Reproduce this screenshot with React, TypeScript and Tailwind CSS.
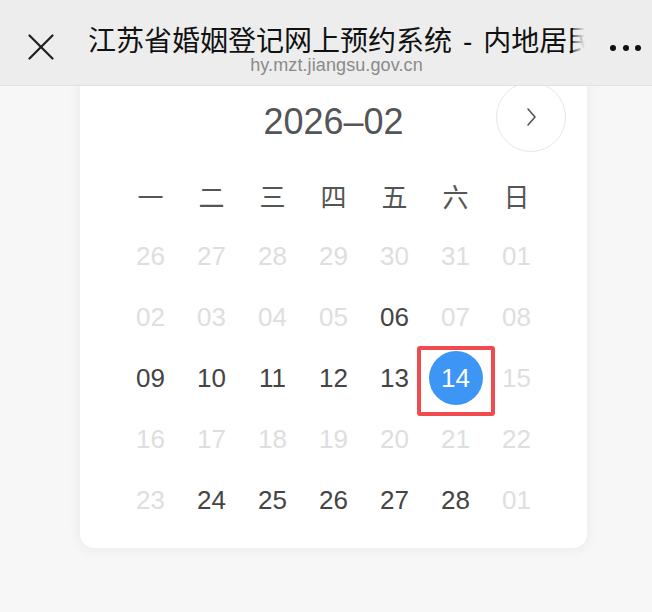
const weekdays = ["一", "二", "三", "四", "五", "六", "日"];

type Day = { label: string; state: "off" | "on" | "selected" };

const rows: Day[][] = [
  ["26", "27", "28", "29", "30", "31", "01"].map((d) => ({ label: d, state: "off" })),
  [
    { label: "02", state: "off" },
    { label: "03", state: "off" },
    { label: "04", state: "off" },
    { label: "05", state: "off" },
    { label: "06", state: "on" },
    { label: "07", state: "off" },
    { label: "08", state: "off" },
  ],
  [
    { label: "09", state: "on" },
    { label: "10", state: "on" },
    { label: "11", state: "on" },
    { label: "12", state: "on" },
    { label: "13", state: "on" },
    { label: "14", state: "selected" },
    { label: "15", state: "off" },
  ],
  ["16", "17", "18", "19", "20", "21", "22"].map((d) => ({ label: d, state: "off" })),
  [
    { label: "23", state: "off" },
    { label: "24", state: "on" },
    { label: "25", state: "on" },
    { label: "26", state: "on" },
    { label: "27", state: "on" },
    { label: "28", state: "on" },
    { label: "01", state: "off" },
  ],
];

function DayCell({ day }: { day: Day }) {
  if (day.state === "selected") {
    return (
      <div className="relative h-[61px] flex items-center justify-center">
        <div className="w-[54px] h-[54px] rounded-full bg-[#3d96f6] text-white flex items-center justify-center">
          {day.label}
        </div>
        {/* red highlight box */}
        <div className="absolute left-[-8px] right-[-9px] top-[-2px] bottom-[-7px] border-[4px] border-[#f0494e] rounded-[3px]" />
      </div>
    );
  }
  return (
    <div
      className={
        day.state === "on"
          ? "h-[61px] flex items-center justify-center text-[#444]"
          : "h-[61px] flex items-center justify-center text-[#dedede]"
      }
    >
      {day.label}
    </div>
  );
}

export default function App() {
  return (
    <main className="w-[652px] h-[612px] overflow-hidden bg-[#f7f7f7] font-['Liberation_Sans','Noto_Sans_CJK_SC',sans-serif]">
      {/* Top bar */}
      <header className="relative z-10 h-[86px] bg-[#ededed] border-b border-[#e2e2e2] flex">
        <div className="w-[88px] pl-[28px] pt-[34px]">
          <svg width="26" height="26" viewBox="0 0 26 26" fill="none" stroke="#1f1f1f" strokeWidth="2.2" strokeLinecap="round">
            <line x1="1.5" y1="1.5" x2="24.5" y2="24.5" />
            <line x1="24.5" y1="1.5" x2="1.5" y2="24.5" />
          </svg>
        </div>
        <div className="relative flex-1 min-w-0 pt-[25px] flex flex-col items-center">
          <div className="w-full overflow-hidden whitespace-nowrap h-[29px] leading-[29px] text-[28px] text-[#111] font-['Noto_Sans_CJK_SC',sans-serif]">
            江苏省婚姻登记网上预约系统<span className="mx-[11px] font-['Liberation_Sans',sans-serif]">-</span>内地居民婚姻登记
          </div>
          <div className="absolute right-0 top-[25px] w-[12px] h-[29px] bg-gradient-to-r from-[#ededed]/40 to-[#ededed]" />
          <div className="mt-[1px] leading-[20px] text-[18px] tracking-[0.1px] text-[#8a8a8a]">hy.mzt.jiangsu.gov.cn</div>
        </div>
        <div className="w-[67px] pl-[25px] pt-[45px] flex gap-[6.5px]">
          <span className="w-[6px] h-[6px] rounded-full bg-[#111]" />
          <span className="w-[6px] h-[6px] rounded-full bg-[#111]" />
          <span className="w-[6px] h-[6px] rounded-full bg-[#111]" />
        </div>
      </header>

      {/* Calendar card */}
      <section className="ml-[80px] w-[507px] -mt-[8px] bg-white rounded-b-[14px] shadow-[0_2px_14px_rgba(0,0,0,0.06)] pb-[17px]">
        <div className="grid grid-cols-[1fr_auto_1fr] items-start h-[78px]">
          <div />
          <div className="mt-[22px] leading-[44px] text-[36px] text-[#555]">2026–02</div>
          <div className="flex justify-end pr-[21px] pt-[4px]">
            <div className="w-[70px] h-[70px] rounded-full border-[1.5px] border-[#e6e6e6] bg-white flex items-center justify-center">
              <svg width="12" height="20" viewBox="0 0 12 20" fill="none" stroke="#555" strokeWidth="1.6" strokeLinecap="round" strokeLinejoin="round">
                <polyline points="3,2 10,10 3,18" />
              </svg>
            </div>
          </div>
        </div>

        <div className="mt-[8.5px] px-[40px] grid grid-cols-7 text-[26px]">
          {weekdays.map((w) => (
            <div key={w} className="h-[61px] flex items-center justify-center text-[#555] font-['Noto_Sans_CJK_SC',sans-serif]">
              {w}
            </div>
          ))}
          {rows.map((row, r) => row.map((day, i) => <DayCell key={`${r}-${i}`} day={day} />))}
        </div>
      </section>
    </main>
  );
}
